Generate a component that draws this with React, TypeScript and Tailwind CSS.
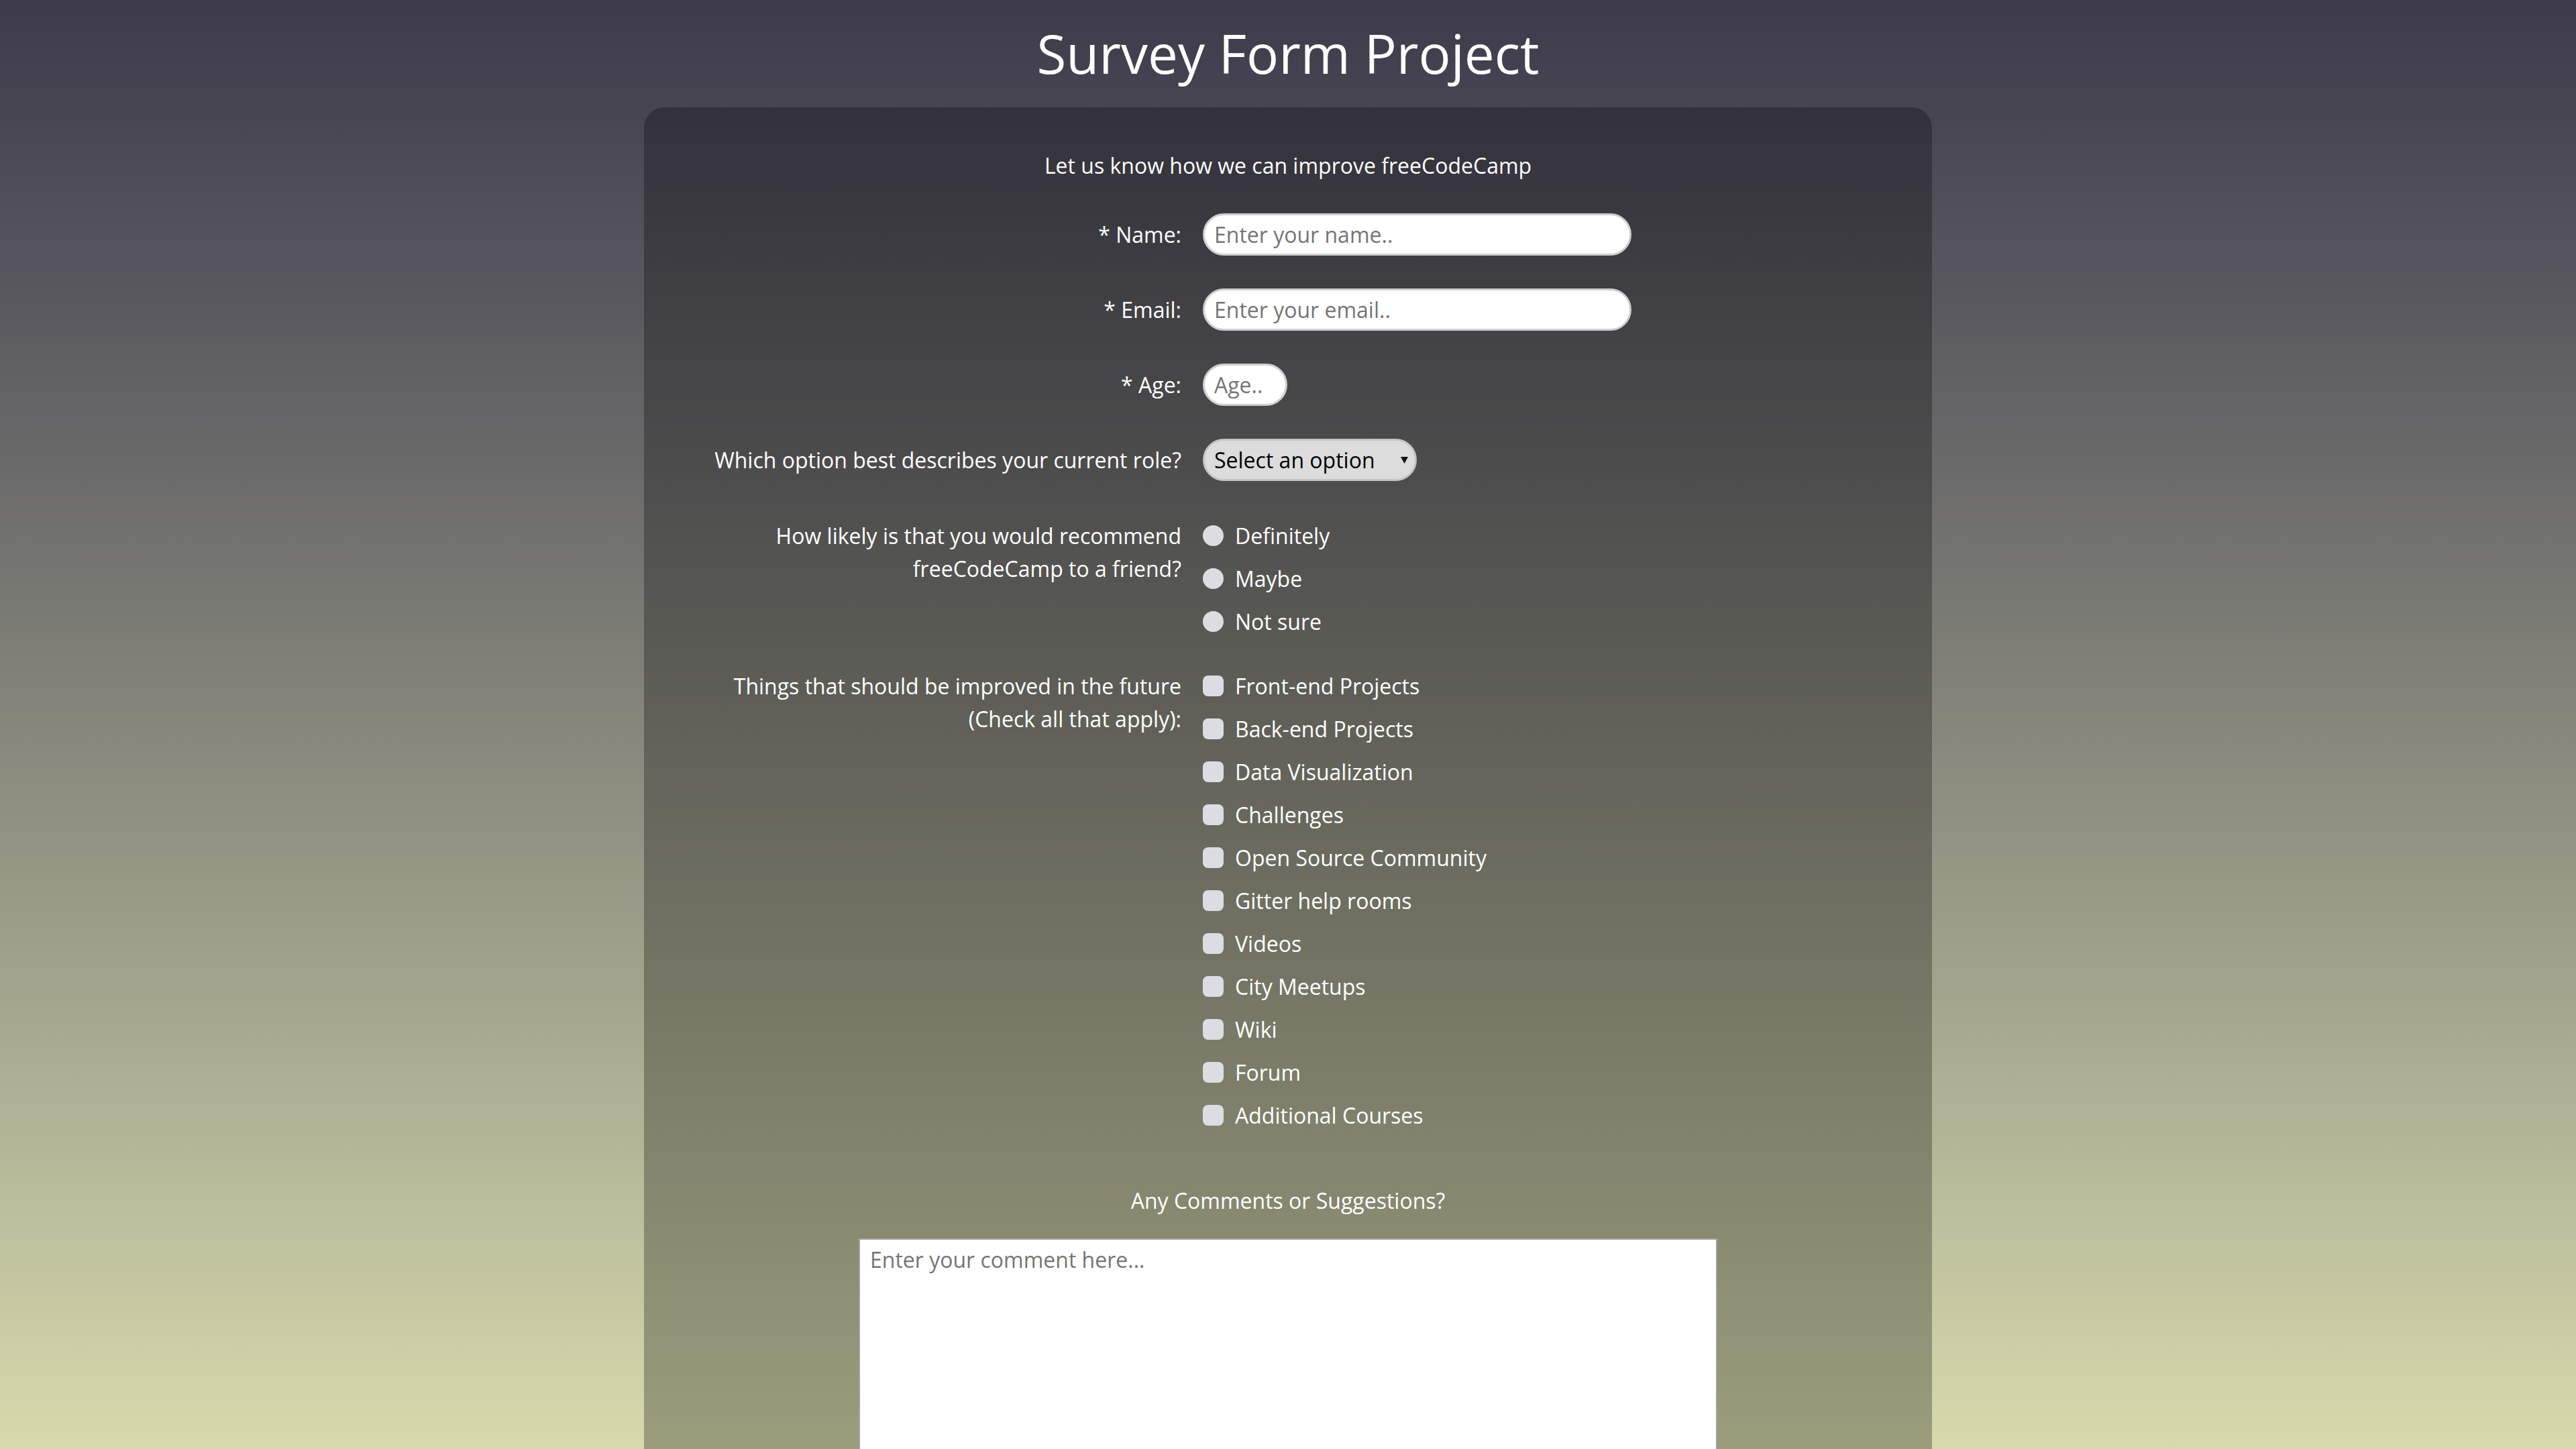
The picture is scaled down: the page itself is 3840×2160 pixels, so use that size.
import { useState } from 'react'

const roles = ['Student', 'Full Time Job', 'Full Time Learner', 'Prefer not to say', 'Other']
const recommend = ['Definitely', 'Maybe', 'Not sure']
const improvements = [
    'Front-end Projects',
    'Back-end Projects',
    'Data Visualization',
    'Challenges',
    'Open Source Community',
    'Gitter help rooms',
    'Videos',
    'City Meetups',
    'Wiki',
    'Forum',
    'Additional Courses',
]

function Row({ label, children }: { label: React.ReactNode; children: React.ReactNode }) {
    return (
        <div className="flex items-center gap-[32px] mb-[49px]">
            <label className="w-[801px] shrink-0 text-right">{label}</label>
            <div className="flex-1">{children}</div>
        </div>
    )
}

export default function App() {
    const [role, setRole] = useState('')
    const [picked, setPicked] = useState<string[]>([])

    const toggle = (item: string) => {
        setPicked((prev) => (prev.includes(item) ? prev.filter((p) => p !== item) : [...prev, item]))
    }

    const inputClass =
        'h-[63px] rounded-full bg-white border-[3px] border-[#cfcfcf] px-[14px] text-[32px] text-black placeholder:text-[#757575] outline-none'

    return (
        <div className="min-h-screen bg-fixed bg-gradient-to-b from-[#3d3a4b] to-[#d8daac] text-white font-['Open_Sans',sans-serif] text-[32px] leading-[49px]">
            <h1 className="pt-[24px] mb-[26px] text-center text-[80px] leading-[110px] font-normal">
                Survey Form Project
            </h1>

            <form className="w-[1920px] mx-auto rounded-[30px] bg-black/[0.28] pt-[62px] pb-[120px]">
                <p className="text-center mb-[47px]">Let us know how we can improve freeCodeCamp</p>

                <Row label="* Name:">
                    <input type="text" placeholder="Enter your name.." className={`${inputClass} w-[639px]`} />
                </Row>
                <Row label="* Email:">
                    <input type="email" placeholder="Enter your email.." className={`${inputClass} w-[639px]`} />
                </Row>
                <Row label="* Age:">
                    <input type="number" placeholder="Age.." className={`${inputClass} w-[126px] appearance-none`} />
                </Row>
                <Row label="Which option best describes your current role?">
                    <div className="relative w-[319px]">
                        <select
                            value={role}
                            onChange={(e) => setRole(e.target.value)}
                            className="w-full h-[63px] appearance-none rounded-full bg-[#dcdcdc] border-[3px] border-[#c4c4c4] pl-[14px] text-[32px] text-black outline-none"
                        >
                            <option value="" disabled>Select an option</option>
                            {roles.map((r) => (
                                <option key={r} value={r}>{r}</option>
                            ))}
                        </select>
                        <svg
                            className="absolute right-[13px] top-[26px] w-[11px] h-[11px] pointer-events-none"
                            viewBox="0 0 10 10"
                        >
                            <path d="M0 1 L10 1 L5 10 Z" fill="#111" />
                        </svg>
                    </div>
                </Row>

                {/* Radio group */}
                <div className="flex gap-[32px] mb-[32px]">
                    <p className="w-[801px] shrink-0 text-right pt-[8px]">
                        How likely is that you would recommend
                        <br />
                        freeCodeCamp to a friend?
                    </p>
                    <div className="flex flex-col">
                        {recommend.map((r) => (
                            <label key={r} className="h-[64px] flex items-center gap-[17px]">
                                <input
                                    type="radio"
                                    name="recommend"
                                    value={r}
                                    className="appearance-none w-[31px] h-[31px] rounded-full bg-[#dcdde1] checked:bg-[#4a90d9]"
                                />
                                {r}
                            </label>
                        ))}
                    </div>
                </div>

                {/* Checkbox group */}
                <div className="flex gap-[32px] mb-[71px]">
                    <p className="w-[801px] shrink-0 text-right pt-[8px]">
                        Things that should be improved in the future
                        <br />
                        (Check all that apply):
                    </p>
                    <div className="flex flex-col">
                        {improvements.map((item) => (
                            <label key={item} className="h-[64px] flex items-center gap-[17px]">
                                <input
                                    type="checkbox"
                                    checked={picked.includes(item)}
                                    onChange={() => toggle(item)}
                                    className="appearance-none w-[31px] h-[31px] rounded-[8px] bg-[#dcdde2] checked:bg-[#4a90d9]"
                                />
                                {item}
                            </label>
                        ))}
                    </div>
                </div>

                <p className="text-center mb-[32px]">Any Comments or Suggestions?</p>
                <textarea
                    placeholder="Enter your comment here..."
                    className="block mx-auto w-[1280px] h-[560px] bg-white border-2 border-[#a0a0a0] px-[15px] pt-[6px] text-[32px] leading-normal text-black placeholder:text-[#757575] outline-none"
                />
            </form>
        </div>
    )
}
